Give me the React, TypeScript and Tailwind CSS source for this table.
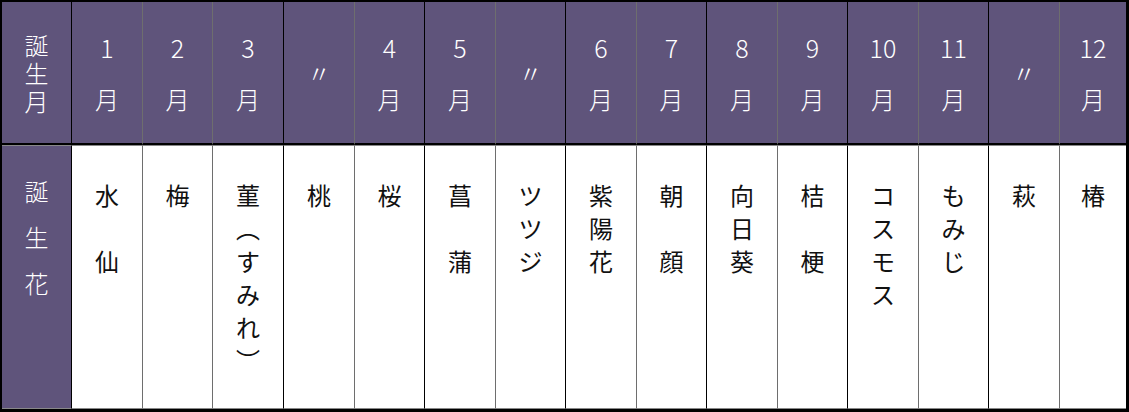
import React from "react";

type Col = { num?: string; ditto?: boolean; flower: string[]; line: string };

const BLACK = "border-r-black";
const GRAY = "border-r-[#6e6e6e]";

const cols: Col[] = [
  { num: "1", flower: ["水", "", "仙"], line: GRAY },
  { num: "2", flower: ["梅"], line: GRAY },
  { num: "3", flower: ["菫", "︵", "す", "み", "れ", "︶"], line: BLACK },
  { ditto: true, flower: ["桃"], line: GRAY },
  { num: "4", flower: ["桜"], line: BLACK },
  { num: "5", flower: ["菖", "", "蒲"], line: GRAY },
  { ditto: true, flower: ["ツ", "ツ", "ジ"], line: BLACK },
  { num: "6", flower: ["紫", "陽", "花"], line: GRAY },
  { num: "7", flower: ["朝", "", "顔"], line: BLACK },
  { num: "8", flower: ["向", "日", "葵"], line: GRAY },
  { num: "9", flower: ["桔", "", "梗"], line: BLACK },
  { num: "10", flower: ["コ", "ス", "モ", "ス"], line: GRAY },
  { num: "11", flower: ["も", "み", "じ"], line: BLACK },
  { ditto: true, flower: ["萩"], line: GRAY },
  { num: "12", flower: ["椿"], line: "" },
];

export default function App() {
  const font = { fontFamily: '"Noto Sans CJK JP", "Noto Sans", sans-serif' };
  return (
    <div className="w-[1129px] h-[412px] bg-white" style={font}>
      <div className="w-[1129px] h-[412px] border-t-2 border-l-2 border-r-[3px] border-b-[3px] border-black box-border grid grid-cols-[70px_71px_70px_71px_71px_70px_71px_70px_71px_70px_71px_70px_71px_70px_71px_66px] grid-rows-[143px_264px]">
        {/* header row */}
        <div className="bg-[#5f547b] border-r border-r-black border-b-2 border-b-black flex flex-col items-center justify-center text-white text-[24px] leading-[28px] font-light text-center">
          <span>
            誕<br />生<br />月
          </span>
        </div>
        {cols.map((c, i) => (
          <div
            key={"h" + i}
            className={`bg-[#5f547b] border-b-2 border-b-black flex flex-col items-center justify-center text-white text-[24px] leading-[52px] font-light ${
              c.line ? "border-r " + c.line : ""
            }`}
          >
            {c.ditto ? (
              <span className="leading-[24px]">〃</span>
            ) : (
              <>
                <span className="text-[25px]">{c.num}</span>
                <span>月</span>
              </>
            )}
          </div>
        ))}
        {/* body row */}
        <div className="bg-[#5f547b] border-r border-r-black border-t border-t-[#888] border-b border-b-[#888] flex flex-col items-center pt-[22px] text-white text-[24px] leading-[46px] font-light">
          <span>誕</span>
          <span>生</span>
          <span>花</span>
        </div>
        {cols.map((c, i) => (
          <div
            key={"b" + i}
            className={`bg-white border-t border-t-[#888] border-b border-b-[#888] flex flex-col items-center pt-[32px] text-[#111] text-[24px] leading-[33px] font-normal ${
              c.line ? "border-r " + c.line : ""
            }`}
          >
            {c.flower.map((ch, j) => (
              <span key={j} className="h-[33px]">
                {ch}
              </span>
            ))}
          </div>
        ))}
      </div>
    </div>
  );
}
